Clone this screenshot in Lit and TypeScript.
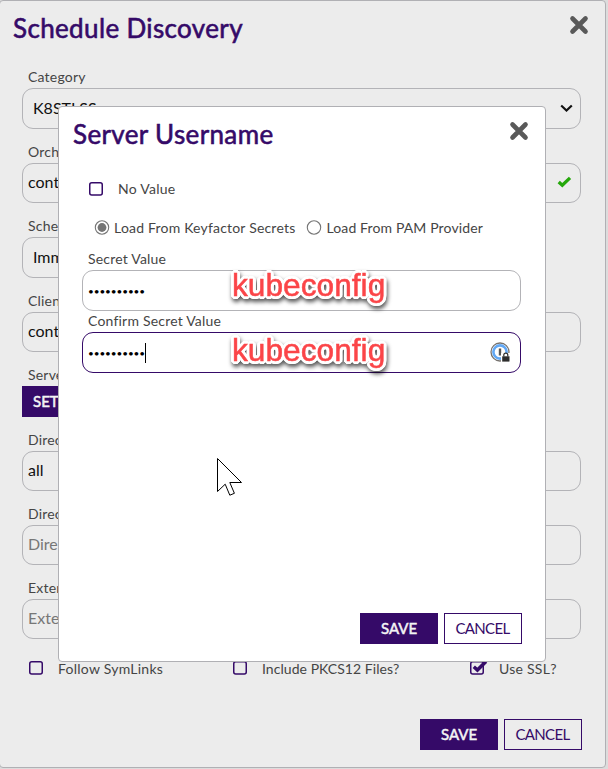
import { LitElement, html, css, svg, nothing } from "lit";
import { customElement } from "lit/decorators.js";
import { classMap } from "lit/directives/class-map.js";

type Field = { label: string; kind: "select" | "input" | "button"; value?: string; placeholder?: string; valid?: boolean; short?: boolean };

const fields: Field[] = [
  { label: "Category", kind: "select", value: "K8STLSS" },
  { label: "Orch", kind: "input", value: "cont", valid: true },
  { label: "Sche", kind: "select", value: "Imm", short: true },
  { label: "Clien", kind: "input", value: "cont" },
  { label: "Serve", kind: "button", value: "SET" },
  { label: "Direc", kind: "input", value: "all" },
  { label: "Direc", kind: "input", placeholder: "Dire" },
  { label: "Exten", kind: "input", placeholder: "Exte" },
];

const closeIcon = html`<svg class="close" width="18" height="18" viewBox="0 0 18 18">
  <path d="M2.5 2.5 15.5 15.5M15.5 2.5 2.5 15.5" stroke="currentColor" stroke-width="4.6" stroke-linecap="butt" />
</svg>`;

const checkbox = (checked = false) => html`<svg class="box" width="18" height="16" viewBox="0 0 18 16">
  <rect x="0.75" y="1.75" width="12.5" height="12.3" rx="2" fill="none" stroke="#350a68" stroke-width="1.5" />
  ${checked ? svg`<path d="M3.8 6.8 7.4 10 16 1.4" fill="none" stroke="#350a68" stroke-width="3.5" stroke-linejoin="miter" />` : nothing}
</svg>`;

@customElement("app-root")
export class AppRoot extends LitElement {
  static styles = css`
    :host {
      display: block;
      position: relative;
      width: 608px;
      height: 769px;
      overflow: hidden;
      background: #dcdcdc;
      font: 14px/20px Lato, "Open Sans", sans-serif;
      color: #454545;
      white-space: nowrap;
    }
    * { box-sizing: border-box; }
    svg { display: block; flex: none; }
    .dialog { display: flex; flex-direction: column; border: 1px solid #b0b0b4; border-radius: 4px; }
    .outer { width: 607px; height: 768px; margin-left: -1px; background: #ececec; padding: 0 24px 17px 22px; }
    .inner { position: absolute; left: 58px; top: 106px; width: 488px; height: 556px; background: #fff; padding: 0 24px 17px 23px; }
    .head { display: flex; justify-content: space-between; align-items: flex-start; height: 65px; padding-top: 15px; margin: 0 -7px 0 -9px; }
    .inner .head { height: 72px; }
    h1 { margin: -4px 0 0; font: 400 26px/32px Lato, sans-serif; letter-spacing: 0.36px; color: #350a68; -webkit-text-stroke: 0.6px #350a68; }
    .close { color: #595959; overflow: visible; }
    .close path { stroke-linecap: round; }
    .fields { display: flex; flex-direction: column; gap: 12px; }
    .label { height: 22px; line-height: 22px; padding-left: 6px; letter-spacing: 0.2px; }
    .outer .label { line-height: 21px; }
    .outer .field:first-child .label { line-height: 22px; }
    .control { display: flex; align-items: center; justify-content: space-between; height: 40px; border: 1px solid #b3b3b7; border-radius: 11px; padding: 0 8px 2px 5px; font-size: 16px; color: #111; }
    .select { height: 41px; padding-left: 10px; padding-right: 7px; }
    .short { width: 300px; }
    .placeholder { color: #777; }
    .btn { display: flex; align-items: center; justify-content: center; width: 78px; height: 31px; padding-bottom: 2px; border: 1px solid #350a68; color: #350a68; font-size: 15px; }
    .cancel { letter-spacing: -0.65px; padding-right: 1px; }
    .foot { display: flex; justify-content: flex-end; gap: 6px; margin: auto -1px 0 0; }
    .solid { background: #350a68; color: #f4f4f4; -webkit-text-stroke: 0.5px #f4f4f4; letter-spacing: 0; }
    .set { justify-content: flex-start; padding-left: 10px; }
    .checks { display: grid; grid-template-columns: 204px 237px auto; padding-left: 7px; margin-top: 19px; }
    .check { display: flex; align-items: center; gap: 11px; letter-spacing: 0.25px; }
    .checks span { padding-top: 1px; margin-bottom: -1px; }
    .checks .t-pk { letter-spacing: 0.05px; }
    .novalue { padding-left: 7px; height: 20px; }
    .radios { display: flex; margin: 19px 0 10px 12px; height: 20px; }
    .radio { display: flex; align-items: center; gap: 4px; margin-right: 11px; }
    .r1 { letter-spacing: 0.2px; }
    .r2 { letter-spacing: 0.13px; }
    .inner .control { height: 41px; padding: 0 9px 0 5px; }
    .tight { height: 21px; line-height: 20px; }
    .inner .focused { border-color: #350a68; }
    .dots { display: flex; align-items: center; height: 20px; font: 10px/20px Lato, sans-serif; letter-spacing: -0.1px; color: #000; }
    .caret { width: 1px; height: 20px; background: #000; }
    .note {
      position: absolute; left: 173px; font: 31.7px/36px "Liberation Sans", sans-serif; color: #fb4548;
      -webkit-text-stroke: 0.5px #fb4548;
      text-shadow: 3px 0 #fff, -3px 0 #fff, 0 3px #fff, 0 -3px #fff, 2px 2px #fff, -2px 2px #fff, 2px -2px #fff, -2px -2px #fff,
        3px 1px #fff, -3px 1px #fff, 3px -1px #fff, -3px -1px #fff, 1px 3px #fff, -1px 3px #fff, 1px -3px #fff, -1px -3px #fff;
      filter: drop-shadow(1px 3px 2px rgba(0, 0, 0, 0.65));
    }
    .first { top: 160px; }
    .second { top: 225px; }
    .cursor { position: absolute; left: 216px; top: 457px; }
  `;

  private control(f: Field) {
    if (f.kind === "button") return html`<div class="btn solid set">${f.value}</div>`;
    return html`<div class=${classMap({ control: true, select: f.kind === "select", short: !!f.short })}>
      <span class=${classMap({ placeholder: !!f.placeholder })}>${f.value ?? f.placeholder}</span>
      ${f.kind === "select"
        ? html`<svg width="13" height="9" viewBox="0 0 13 9"><path d="M1.2 2.5 6.5 7.5 11.8 2.5" fill="none" stroke="#111" stroke-width="2.2" /></svg>`
        : nothing}
      ${f.valid
        ? html`<svg width="15" height="12" viewBox="0 0 15 12"><path d="M1.7 6 5.3 9.2 13 1.9" fill="none" stroke="#25a80b" stroke-width="3.3" /></svg>`
        : nothing}
    </div>`;
  }

  private radio(text: string, on: boolean, cls: string) {
    return html`<div class="radio">
      <svg width="16" height="16" viewBox="0 0 16 16">
        <circle cx="8" cy="7.5" r="6.7" fill="none" stroke="#757575" stroke-width="1.1" />
        ${on ? svg`<circle cx="8" cy="7.5" r="4.4" fill="#757575" />` : nothing}
      </svg><span class=${cls}>${text}</span></div>`;
  }

  private buttons() {
    return html`<div class="foot"><div class="btn solid">SAVE</div><div class="btn cancel">CANCEL</div></div>`;
  }

  private dots() {
    return html`<span>••••••••••</span>`;
  }

  render() {
    return html`
      <section class="dialog outer">
        <header class="head"><h1>Schedule Discovery</h1>${closeIcon}</header>
        <div class="fields">
          ${fields.map((f) => html`<div class="field"><div class="label">${f.label}</div>${this.control(f)}</div>`)}
        </div>
        <div class="checks">
          <div class="check">${checkbox()}<span>Follow SymLinks</span></div>
          <div class="check t-pk">${checkbox()}<span>Include PKCS12 Files?</span></div>
          <div class="check">${checkbox(true)}<span>Use SSL?</span></div>
        </div>
        ${this.buttons()}
      </section>

      <section class="dialog inner">
        <header class="head"><h1>Server Username</h1>${closeIcon}</header>
        <div class="check novalue">${checkbox()}<span>No Value</span></div>
        <div class="radios">
          ${this.radio("Load From Keyfactor Secrets", true, "r1")}
          ${this.radio("Load From PAM Provider", false, "r2")}
        </div>
        <div class="label">Secret Value</div>
        <div class="control"><div class="dots">${this.dots()}</div></div>
        <div class="label tight">Confirm Secret Value</div>
        <div class="control focused">
          <div class="dots">${this.dots()}<i class="caret"></i></div>
          <svg width="21" height="21" viewBox="0 0 21 21">
            <circle cx="10" cy="10" r="9" fill="#fff" stroke="#77736f" stroke-width="1.3" />
            <circle cx="10" cy="10" r="6.6" fill="none" stroke="#62a8f5" stroke-width="2.6" />
            <path d="M10 6.5v7" stroke="#555" stroke-width="2.4" />
            <path d="M11 11h10v10H11z" fill="#fff" />
            <path d="M12.2 14.3h7.3v5.3h-7.3z" fill="#2d2d2d" />
            <path d="M13.8 14.5v-1.4a2 2 0 0 1 4 0v1.4" fill="none" stroke="#2d2d2d" stroke-width="1.2" />
          </svg>
        </div>
        ${this.buttons()}
        <span class="note first">kubeconfig</span>
        <span class="note second">kubeconfig</span>
      </section>

      <svg class="cursor" width="28" height="40" viewBox="0 0 28 40">
        <path d="M1.5 1.5V34.5L9.2 27.2 13.8 38.2 18.4 36.3 13.8 25.5H25.5Z" fill="#fff" stroke="#000" stroke-width="1" />
      </svg>
    `;
  }
}
